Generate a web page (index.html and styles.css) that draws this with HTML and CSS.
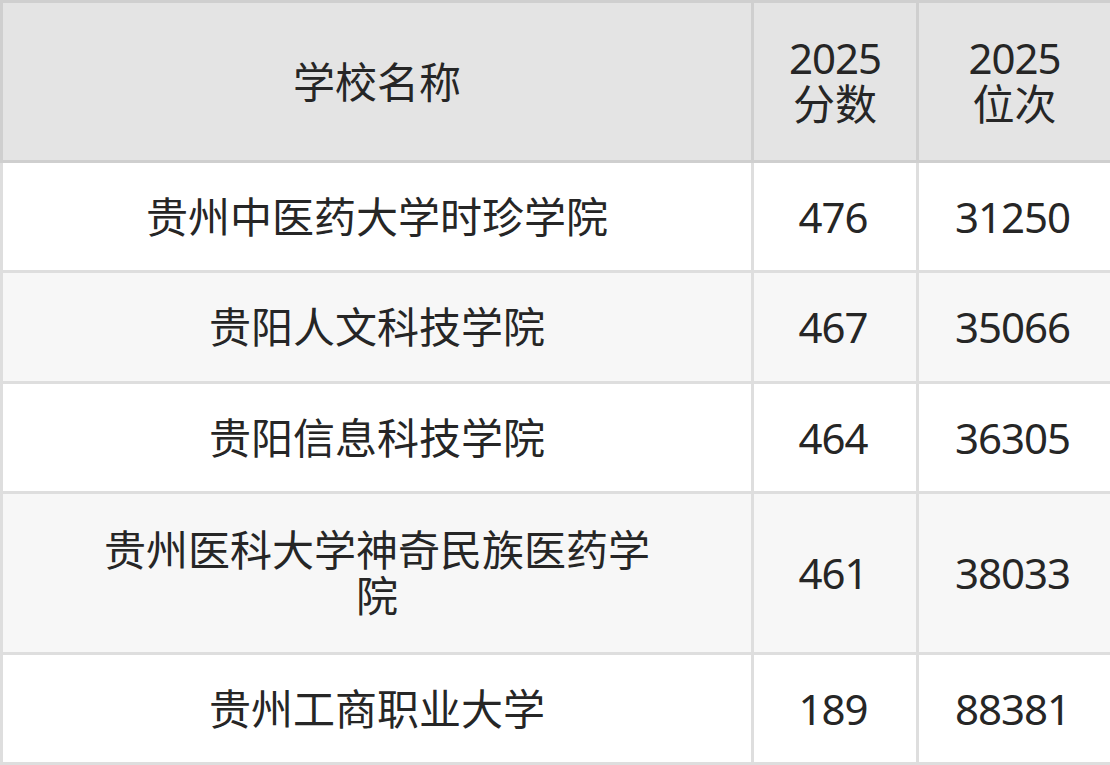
FILE: index.html
```html
<!DOCTYPE html>
<html lang="zh-CN">
<head>
<meta charset="utf-8">
<link rel="stylesheet" href="styles.css">
</head>
<body>
<table class="score-table">
  <colgroup>
    <col class="col-name">
    <col class="col-score">
    <col class="col-rank">
  </colgroup>
  <thead>
    <tr class="head-row">
      <th class="name">学校名称</th>
      <th><span class="num">2025</span><br>分数</th>
      <th><span class="num">2025</span><br>位次</th>
    </tr>
  </thead>
  <tbody>
    <tr class="r-odd"><td class="name">贵州中医药大学时珍学院</td><td class="num">476</td><td class="num">31250</td></tr>
    <tr class="r-even"><td class="name">贵阳人文科技学院</td><td class="num">467</td><td class="num">35066</td></tr>
    <tr class="r-odd"><td class="name">贵阳信息科技学院</td><td class="num">464</td><td class="num">36305</td></tr>
    <tr class="r-even r-tall"><td class="name">贵州医科大学神奇民族医药学院</td><td class="num">461</td><td class="num">38033</td></tr>
    <tr class="r-odd"><td class="name">贵州工商职业大学</td><td class="num">189</td><td class="num">88381</td></tr>
  </tbody>
</table>
</body>
</html>
```
FILE: styles.css
```css
html, body {
  margin: 0;
  padding: 0;
  background: #ffffff;
}
.score-table {
  width: 1110px;
  border-collapse: collapse;
  table-layout: fixed;
  font-family: "Noto Sans", "Noto Sans CJK SC", sans-serif;
  font-size: 42px;
  line-height: 46px;
  color: #262626;
}
.col-name { width: 751px; }
.col-score { width: 165px; }
.col-rank { width: 194px; }
.score-table th,
.score-table td {
  text-align: center;
  vertical-align: middle;
  padding: 0;
  border: 3px solid #dedede;
  font-weight: normal;
}
.num {
  letter-spacing: -1px;
}
.score-table td.num {
  padding-right: 4px;
}
.score-table td.name,
.score-table th.name {
  padding: 0 92px;
}
.head-row th {
  background: #e4e4e4;
  border-color: #cfcfcf;
  height: 155px;
  padding-bottom: 2px;
}
.r-odd td {
  background: #ffffff;
  height: 107px;
}
.r-even td {
  background: #f7f7f7;
  height: 108px;
}
.r-tall td {
  height: 158px;
}
```
